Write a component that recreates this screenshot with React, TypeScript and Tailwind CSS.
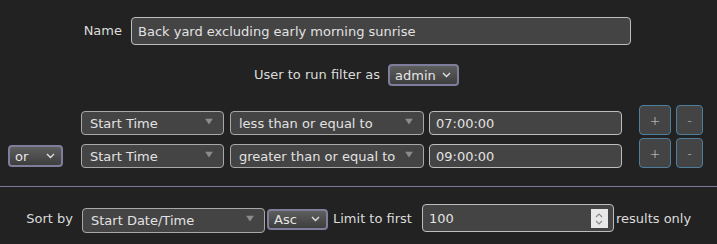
import React from "react";

// Filter editor: name, owner, two time conditions and sort/limit settings.

const font = { fontFamily: '"DejaVu Sans", Verdana, sans-serif' };

function Chevron() {
  return (
    <svg width="9" height="6" viewBox="0 0 9 6" className="pointer-events-none absolute right-[8px] top-1/2 -translate-y-1/2">
      <polyline points="1,1 4.5,4.5 8,1" fill="none" stroke="#e0e0e0" strokeWidth="1.4" />
    </svg>
  );
}

function Caret() {
  return (
    <svg width="8" height="6" viewBox="0 0 8 6" className="pointer-events-none absolute right-[11px] top-1/2 -translate-y-[75%]">
      <polygon points="0,0 8,0 4,6" fill="#8c8c8c" />
    </svg>
  );
}

// native-looking select with the lavender ring (admin / or / Asc)
function RingSelect({ value, w, h }: { value: string; w: string; h: string }) {
  return (
    <div className={`relative ${w} ${h}`}>
      <div className="flex h-full items-center rounded-[4px] border-2 border-[#7e7e9c] bg-gradient-to-b from-[#5e5e5e] to-[#3e3e3e] pl-[5px] pt-[2px] text-[13px] text-[#e6e6e6]">
        {value}
      </div>
      <Chevron />
    </div>
  );
}

function FieldSelect({ value, w, h = "h-[24px]" }: { value: string; w: string; h?: string }) {
  return (
    <div className={`relative ${w} ${h}`}>
      <div className="flex h-full items-center rounded-[4px] border border-[#a8a8a8] bg-[#444] pl-[8px] pt-[2px] text-[13px] text-[#e2e2e2]">
        {value}
      </div>
      <Caret />
    </div>
  );
}

function TextBox({ value, w, h }: { value: string; w: string; h: string }) {
  return (
    <input
      readOnly
      value={value}
      style={font}
      className={`${w} ${h} rounded-[4px] border border-[#bdbdbd] bg-[#444] px-[6px] pt-[1px] text-[13px] text-[#e2e2e2] outline-none`}
    />
  );
}

function SmallButton({ label, w }: { label: string; w: string }) {
  return (
    <button
      style={font}
      className={`${w} h-[30px] rounded-[4px] border border-[#4f7f9f] bg-[#444] pt-[2px] text-[13px] font-light text-[#d4d4d4]`}
    >
      {label}
    </button>
  );
}

function ConditionRow({ field, op, value }: { field: string; op: string; value: string }) {
  return (
    <div className="flex items-end">
      <FieldSelect value={field} w="w-[143px]" />
      <div className="w-[6px]" />
      <FieldSelect value={op} w="w-[194px]" />
      <div className="w-[5px]" />
      <TextBox value={value} w="w-[193px]" h="h-[24px]" />
      <div className="w-[17px]" />
      <div className="flex gap-[5px] self-start">
        <SmallButton label="+" w="w-[32px]" />
        <SmallButton label="-" w="w-[27px]" />
      </div>
    </div>
  );
}

export default function App() {
  return (
    <div style={font} className="h-[244px] w-[717px] overflow-hidden bg-[#222] text-[13px] text-[#dcdcdc]">
      <div className="flex items-center pt-[17px]">
        <span className="w-[122px] text-right">Name</span>
        <div className="w-[9px]" />
        <TextBox value="Back yard excluding early morning sunrise" w="w-[500px]" h="h-[28px]" />
      </div>

      <div className="mt-[19px] flex items-center pl-[254px]">
        <span>User to run filter as</span>
        <div className="w-[8px]" />
        <RingSelect value="admin" w="w-[71px]" h="h-[22px]" />
      </div>

      <div className="mt-[19px] grid grid-cols-[81px_auto] gap-y-[3px]">
        <div />
        <ConditionRow field="Start Time" op="less than or equal to" value="07:00:00" />
        <div className="flex items-end pb-[1px] pl-[8px]">
          <RingSelect value="or" w="w-[55px]" h="h-[22px]" />
        </div>
        <ConditionRow field="Start Time" op="greater than or equal to" value="09:00:00" />
      </div>

      <div className="mt-[18px] h-px bg-[#7a7a9a]" />

      <div className="mt-[17px] flex h-[28px] items-center">
        <span className="w-[73px] pt-[2px] text-right">Sort by</span>
        <div className="w-[9px]" />
        <div className="mt-[4px]">
          <FieldSelect value="Start Date/Time" w="w-[183px]" h="h-[25px]" />
        </div>
        <div className="w-[2px]" />
        <div className="mt-[2px]">
          <RingSelect value="Asc" w="w-[61px]" h="h-[21px]" />
        </div>
        <div className="w-[5px]" />
        <span className="pt-[2px]">Limit to first</span>
        <div className="w-[10px]" />
        <div className="relative h-[28px] w-[192px]">
          <TextBox value="100" w="w-[192px]" h="h-[28px]" />
          <div className="absolute right-[6px] top-[5px] flex h-[19px] w-[17px] flex-col items-center justify-center gap-[2px] bg-[#e8e8e8]">
            <svg width="8" height="5" viewBox="0 0 8 5">
              <polyline points="1,4 4,1 7,4" fill="none" stroke="#8a8a8a" strokeWidth="1.2" />
            </svg>
            <svg width="8" height="5" viewBox="0 0 8 5">
              <polyline points="1,1 4,4 7,1" fill="none" stroke="#8a8a8a" strokeWidth="1.2" />
            </svg>
          </div>
        </div>
        <div className="w-[2px]" />
        <span className="pt-[2px]">results only</span>
      </div>
    </div>
  );
}
